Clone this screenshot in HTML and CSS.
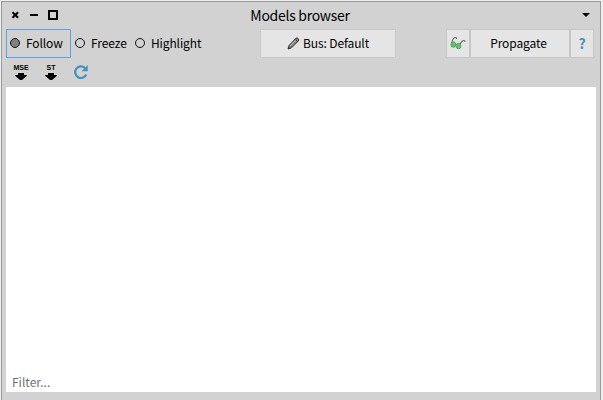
FILE: index.html
```
<!DOCTYPE html>
<html lang="en">
<head>
<meta charset="utf-8">
<title>Models browser</title>
<link rel="stylesheet" href="styles.css">
</head>
<body>
<main class="window">
  <header class="titlebar">
    <div class="controls">
      <svg width="48" height="14" viewBox="0 0 48 14"><path d="M2.5 4.2l5.6 5.6M8.1 4.2l-5.6 5.6" stroke="#000" stroke-width="2"/><path d="M20 7h8" stroke="#000" stroke-width="2"/><rect x="39" y="3" width="8" height="8" fill="none" stroke="#000" stroke-width="2"/></svg>
    </div>
    <h1 class="title">Models browser</h1>
    <svg class="menu" width="8" height="4" viewBox="0 0 8 4"><path d="M0 0h8L4 4z"/></svg>
  </header>
  <div class="toolbar">
    <div class="modes">
      <label class="mode selected"><i class="radio"></i><span>Follow</span></label>
      <label class="mode"><i class="radio"></i><span>Freeze</span></label>
      <label class="mode highlight"><i class="radio"></i><span>Highlight</span></label>
    </div>
    <button class="button bus"><svg width="13" height="13" viewBox="0 0 13 13"><path d="M1 12L2 8.5 9 1.2q1-.8 2 .2l.5.6q.8 1-.1 1.9L4.3 11z" fill="#777" stroke="#444" stroke-width="1"/><path d="M3.2 9.2L9.5 2.8" stroke="#ccc"/><path d="M8.2 2.3l2.6 2.6" stroke="#444"/><path d="M1 12l.6-2 1.5 1.4z" fill="#222"/></svg><span>Bus: Default</span></button>
    <div class="actions">
      <button class="button inspect"><svg width="16" height="14" viewBox="0 0 16 14"><path d="M1.8 7C2.4 4 4.2 1.5 5.6 1.5q1 0 1 1.5M10 8.5C10.7 6.2 12.8 4.3 14.2 4.5q1 .2.8 1.5" fill="none" stroke="#666" stroke-width="1.1"/><rect x="1" y="5.9" width="4.6" height="5.3" rx="2.2" fill="#69bf70" stroke="#4fa55a"/><rect x="6.2" y="7.4" width="4.6" height="5.3" rx="2.2" fill="#69bf70" stroke="#4fa55a"/></svg></button>
      <button class="button propagate"><span>Propagate</span></button>
      <button class="button help"><span>?</span></button>
    </div>
  </div>
  <div class="tools">
    <div class="tool"><span>MSE</span><svg width="12" height="7" viewBox="0 0 12 7"><path d="M3 0h6v2h2.7v1L7 7H5L.3 3V2H3z"/></svg></div>
    <div class="tool"><span>ST</span><svg width="12" height="7" viewBox="0 0 12 7"><path d="M3 0h6v2h2.7v1L7 7H5L.3 3V2H3z"/></svg></div>
    <svg class="refresh" width="16" height="16" viewBox="0 0 16 16"><path d="M12 4A5.8 5.8 0 1 0 13.3 10.5" fill="none" stroke="#4590bd" stroke-width="2.2"/><path d="M14.7 1v6.3H8.5z" fill="#4590bd"/></svg>
  </div>
  <section class="content"><span class="filter">Filter...</span></section>
</main>
</body>
</html>
```
FILE: styles.css
```
* { box-sizing: border-box; }
body {
  margin: 0;
  height: 400px;
  overflow: hidden;
  padding: 1px 2px 0 1px;
  background: #efefef;
  color: #000;
  font: 12px/16px "Noto Sans CJK SC", "Open Sans", sans-serif;
}
.window {
  height: 402px;
  border: 1px solid #979b9a;
  background: #d2d2d2;
  padding: 0 4px;
}
.titlebar {
  height: 27px;
  padding-bottom: 2px;
  display: grid;
  grid-template-columns: 1fr auto 1fr;
  align-items: center;
}
.controls { padding-left: 4px; height: 14px; }
.controls svg, .tool svg, .refresh { display: block; }
.title {
  margin: 0;
  padding-right: 2px;
  font-size: 14px;
  line-height: 18px;
  font-weight: 400;
  letter-spacing: -0.28px;
}
.menu { justify-self: end; margin-right: 6px; }
.toolbar {
  display: grid;
  grid-template-columns: 254px 136px 1fr;
  height: 29px;
}
.modes { display: flex; }
.mode {
  display: flex;
  align-items: center;
  gap: 6px;
  width: 65px;
  padding: 0 0 1px 3px;
  border: 1px solid transparent;
  white-space: nowrap;
  letter-spacing: -0.12px;
}
.mode span { padding-bottom: 1px; }
.mode + .mode { width: 60px; }
.mode.highlight { width: 75px; }
.selected { border-color: #62a1e0; }
.radio {
  flex: none;
  width: 10px;
  height: 10px;
  border: 1px solid #111;
  border-radius: 50%;
}
.selected .radio { background: #808080; }
.button {
  display: flex;
  align-items: center;
  justify-content: center;
  gap: 3px;
  padding: 0 0 1px;
  border: 1px solid #c7c7c7;
  background: #e5e5e5;
  color: #000;
  font: inherit;
  letter-spacing: -0.1px;
}
.button span { padding-bottom: 1px; }
.propagate span { padding-right: 3px; }
.actions { display: flex; justify-content: flex-end; margin-right: 2px; }
.inspect { width: 24px; }
.propagate { width: 100px; }
.help { width: 24px; color: #4590bd; font-weight: 700; font-size: 14px; }
.tools { display: flex; height: 29px; padding: 6px 0 0 5px; }
.tool {
  width: 20px;
  margin-right: 10px;
  display: flex;
  flex-direction: column;
  align-items: center;
  font: 700 7px/8px "Liberation Sans", sans-serif;
}
.tool svg { margin-top: 1px; }
.refresh { margin-left: 2px; }
.content {
  height: 305px;
  display: flex;
  align-items: flex-end;
  padding: 0 6px 2px;
  background: #fff;
}
.filter { color: #707070; }
```
